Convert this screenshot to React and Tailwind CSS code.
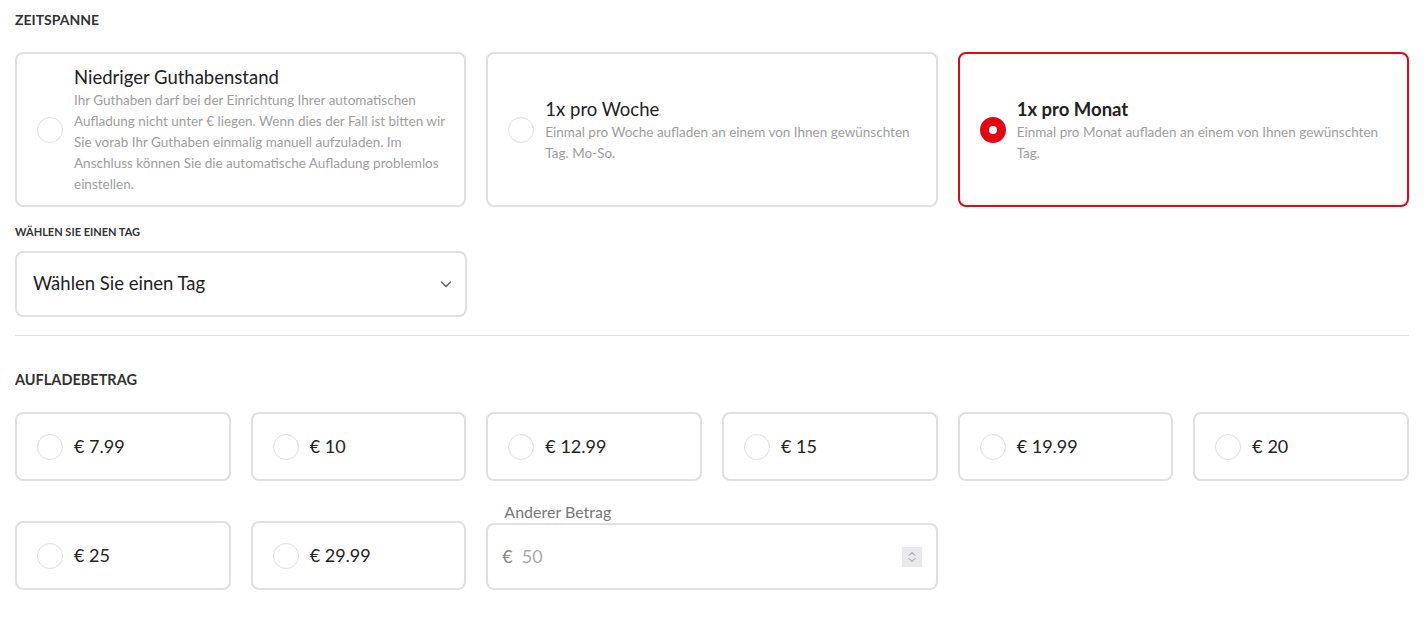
import React, { useState } from 'react';

const font = { fontFamily: 'Lato, "Open Sans", sans-serif' };

const periods = [
  {
    id: 'low',
    title: 'Niedriger Guthabenstand',
    desc: 'Ihr Guthaben darf bei der Einrichtung Ihrer automatischen Aufladung nicht unter € liegen. Wenn dies der Fall ist bitten wir Sie vorab Ihr Guthaben einmalig manuell aufzuladen. Im Anschluss können Sie die automatische Aufladung problemlos einstellen.',
  },
  {
    id: 'week',
    title: '1x pro Woche',
    desc: 'Einmal pro Woche aufladen an einem von Ihnen gewünschten Tag. Mo-So.',
  },
  {
    id: 'month',
    title: '1x pro Monat',
    desc: 'Einmal pro Monat aufladen an einem von Ihnen gewünschten Tag.',
  },
];

const amounts = ['7.99', '10', '12.99', '15', '19.99', '20', '25', '29.99'];

function Radio({ checked }) {
  if (checked) {
    return (
      <span className="w-[26px] h-[26px] shrink-0 rounded-full bg-[#e30613] flex items-center justify-center">
        <span className="w-[8px] h-[8px] rounded-full bg-white" />
      </span>
    );
  }
  return <span className="w-[26px] h-[26px] shrink-0 rounded-full border border-[#e0e0e0] bg-white" />;
}

export default function App() {
  const [period, setPeriod] = useState('month');
  const [amount, setAmount] = useState(null);

  return (
    <div className="bg-white min-h-screen pl-[15px] pr-[18px] pt-[10px] text-[#222]" style={font}>
      <h2 className="text-[14px] leading-5 font-bold uppercase text-[#333] mb-[22px]">Zeitspanne</h2>

      {/* Period cards */}
      <div className="grid grid-cols-3 gap-5">
        {periods.map((p) => {
          const active = period === p.id;
          return (
            <button
              key={p.id}
              onClick={() => setPeriod(p.id)}
              className={`flex items-center gap-[11px] text-left rounded-lg border-2 pl-5 pr-1 py-[10px] ${
                active ? 'border-[#e30613]' : 'border-[#e0e0e0]'
              }`}
            >
              <Radio checked={active} />
              <div>
                <div className={`text-[18.5px] leading-[26px] ${active ? 'font-bold' : ''}`}>{p.title}</div>
                <p className="text-[13.5px] leading-[21px] text-[#9e9e9e]">{p.desc}</p>
              </div>
            </button>
          );
        })}
      </div>

      <div className="mt-[18px] text-[11px] leading-[14px] font-bold uppercase text-[#333] mb-3">
        Wählen Sie einen Tag
      </div>
      <div className="w-[452px] h-[66px] rounded-lg border-2 border-[#e0e0e0] flex items-center justify-between pl-4 pr-[12px]">
        <span className="text-[18.5px]">Wählen Sie einen Tag</span>
        <svg width="14" height="14" viewBox="0 0 14 14" fill="none" stroke="#666" strokeWidth="1.6" strokeLinecap="round" strokeLinejoin="round">
          <path d="M2.5 5l4.5 4.5L11.5 5" />
        </svg>
      </div>

      <div className="mt-[18px] border-t border-[#e0e0e0]" />

      <h2 className="mt-[34px] text-[14.5px] leading-5 font-bold uppercase text-[#333] mb-[22px]">Aufladebetrag</h2>

      {/* Amounts */}
      <div className="grid grid-cols-6 gap-5 items-end">
        {amounts.map((a) => (
          <button
            key={a}
            onClick={() => setAmount(a)}
            className={`h-[69px] flex items-center gap-[11px] rounded-lg border-2 pl-5 text-left ${
              amount === a ? 'border-[#e30613]' : 'border-[#e0e0e0]'
            }`}
          >
            <Radio checked={amount === a} />
            <span className="text-[18px]">€ {a}</span>
          </button>
        ))}
        <div className="col-span-2">
          <div className="text-[16px] leading-[22px] text-[#777] pl-[18px]">Anderer Betrag</div>
          <div className="h-[67px] rounded-lg border-2 border-[#e0e0e0] flex items-center pl-[14px] pr-[14px]">
            <span className="text-[18px] text-[#888] mr-[9px]">€</span>
            <span className="text-[18px] text-[#aaa] flex-1">50</span>
            <span className="w-[20px] h-[20px] bg-[#e9e9ed] flex flex-col items-center justify-center gap-[2px]">
              <svg width="8" height="5" viewBox="0 0 8 5" fill="none" stroke="#888" strokeWidth="1">
                <path d="M1 4.5L4 1.5l3 3" />
              </svg>
              <svg width="8" height="5" viewBox="0 0 8 5" fill="none" stroke="#888" strokeWidth="1">
                <path d="M1 0.5L4 3.5l3-3" />
              </svg>
            </span>
          </div>
        </div>
      </div>
    </div>
  );
}
